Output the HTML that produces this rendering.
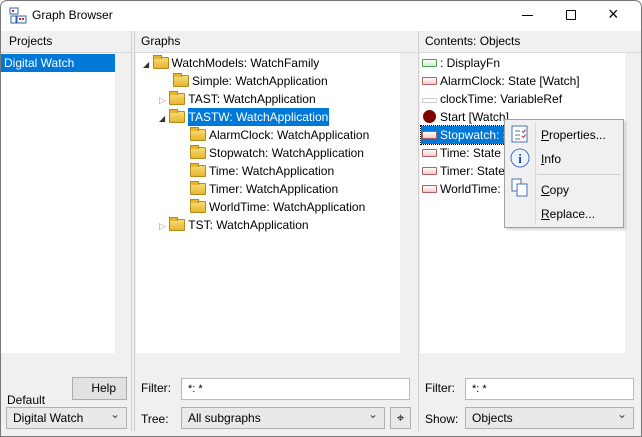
<!DOCTYPE html>
<html><head><style>
*{margin:0;padding:0;box-sizing:border-box}
body{width:642px;height:437px;overflow:hidden;background:#f0f0f0;font:12px "Liberation Sans",sans-serif;color:#000;position:relative}
.a{position:absolute}
.hdr{background:#f0f0f0;border-bottom:1px solid #d8d8d8;height:22px;line-height:21px;padding-left:9px;font-size:12px}
.white{background:#fff}
.row{position:absolute;height:18px;line-height:18px;white-space:nowrap}
.fold{display:inline-block;width:16px;height:12px;background:linear-gradient(#f7dc7a,#e8b52c);border:1px solid #b58a1c;border-radius:1px;vertical-align:-2px;margin-right:3px;position:relative}
.fold:before{content:"";position:absolute;left:-1px;top:-3px;width:7px;height:3px;background:#e8b52c;border:1px solid #b58a1c;border-bottom:none}
.inp{position:absolute;background:#fff;border:1px solid #b9b9b9;height:22px;line-height:20px;padding-left:6px;font-size:11px}
.sel{position:absolute;background:#e9e9e9;border:1px solid #b0b0b0;height:22px;line-height:20px;padding-left:6px}
.sel:after{content:"⌄";position:absolute;right:6px;top:-4px;font-size:12px;color:#444}
.st{display:inline-block;width:15px;height:8px;border:1px solid #b06060;background:linear-gradient(#fff,#f0c8c8);border-radius:1px;margin-right:3px;vertical-align:0}
</style></head><body>
<!-- title bar -->
<div class="a white" style="left:0;top:0;width:642px;height:31px"></div>
<svg class="a" style="left:9px;top:7px" width="18" height="18"><rect x="1" y="1" width="8" height="6" fill="#fff" stroke="#3060b0"/><rect x="8" y="9" width="9" height="7" fill="#fff" stroke="#3060b0"/><rect x="2" y="9" width="5" height="7" fill="#fff" stroke="#3060b0"/><rect x="3" y="3" width="2" height="2" fill="#c03030"/><rect x="10" y="11" width="2" height="2" fill="#c03030"/><rect x="13" y="11" width="2" height="2" fill="#c03030"/></svg>
<div class="a" style="left:32px;top:8px;font-size:12px">Graph Browser</div>
<div class="a" style="left:522px;top:15px;width:11px;height:1px;background:#000"></div>
<div class="a" style="left:566px;top:10px;width:10px;height:10px;border:1px solid #000;border-radius:1px"></div>
<div class="a" style="left:608px;top:4px;font-size:18px;line-height:20px">×</div>

<!-- left pane -->
<div class="a hdr" style="left:0;top:31px;width:132px">Projects</div>
<div class="a white" style="left:1px;top:53px;width:114px;height:300px"></div>
<div class="a" style="left:1px;top:54px;width:114px;height:18px;background:#0078d7;color:#fff;line-height:18px;padding-left:3px">Digital Watch</div>
<div class="a" style="left:131px;top:31px;width:1px;height:400px;background:#cfcfcf"></div>
<div class="a" style="left:72px;top:377px;width:55px;height:23px;background:#e1e1e1;border:1px solid #adadad;text-align:right;padding-right:10px;line-height:21px">Help</div>
<div class="a" style="left:7px;top:393px">Default</div>
<div class="sel" style="left:6px;top:407px;width:121px">Digital Watch</div>

<!-- middle pane -->
<div class="a" style="left:134px;top:31px;width:1px;height:400px;background:#cfcfcf"></div>
<div class="a hdr" style="left:135px;top:31px;width:281px;padding-left:6px">Graphs</div>
<div class="a white" style="left:136px;top:53px;width:264px;height:300px"></div>
<div class="row" style="left:143px;top:54px"><span style="font-size:8px;color:#333">◢</span>&nbsp;<span class="fold"></span>WatchModels: WatchFamily</div>
<div class="row" style="left:173px;top:72px"><span class="fold"></span>Simple: WatchApplication</div>
<div class="row" style="left:159px;top:90px"><span style="font-size:9px;color:#999">▷</span>&nbsp;<span class="fold"></span>TAST: WatchApplication</div>
<div class="row" style="left:159px;top:108px"><span style="font-size:8px;color:#333">◢</span>&nbsp;<span class="fold"></span><span style="background:#0078d7;color:#fff;padding:2px 1px">TASTW: WatchApplication</span></div>
<div class="row" style="left:190px;top:126px"><span class="fold"></span>AlarmClock: WatchApplication</div>
<div class="row" style="left:190px;top:144px"><span class="fold"></span>Stopwatch: WatchApplication</div>
<div class="row" style="left:190px;top:162px"><span class="fold"></span>Time: WatchApplication</div>
<div class="row" style="left:190px;top:180px"><span class="fold"></span>Timer: WatchApplication</div>
<div class="row" style="left:190px;top:198px"><span class="fold"></span>WorldTime: WatchApplication</div>
<div class="row" style="left:159px;top:216px"><span style="font-size:9px;color:#999">▷</span>&nbsp;<span class="fold"></span>TST: WatchApplication</div>
<div class="a" style="left:141px;top:381px">Filter:</div>
<div class="inp" style="left:181px;top:378px;width:229px">*: *</div>
<div class="a" style="left:141px;top:412px">Tree:</div>
<div class="sel" style="left:181px;top:407px;width:204px">All subgraphs</div>
<div class="a" style="left:390px;top:407px;width:21px;height:22px;border:1px solid #b0b0b0;background:#e9e9e9;text-align:center;line-height:19px;font-size:13px">⌖</div>

<!-- right pane -->
<div class="a" style="left:418px;top:31px;width:1px;height:400px;background:#cfcfcf"></div>
<div class="a hdr" style="left:419px;top:31px;width:222px;padding-left:6px">Contents: Objects</div>
<div class="a white" style="left:420px;top:53px;width:205px;height:300px"></div>
<div class="row" style="left:422px;top:54px"><span class="st" style="border-color:#50a050;background:linear-gradient(#fff,#c8f0c8)"></span>: DisplayFn</div>
<div class="row" style="left:422px;top:72px"><span class="st"></span>AlarmClock: State [Watch]</div>
<div class="row" style="left:422px;top:90px"><span class="st" style="border-color:#ccc;height:5px;background:#fff"></span>clockTime: VariableRef</div>
<div class="row" style="left:422px;top:108px"><span style="display:inline-block;width:13px;height:13px;border-radius:50%;background:#800000;vertical-align:-2px;margin-right:4px;margin-left:1px"></span>Start [Watch]</div>
<div class="row" style="left:421px;top:126px;background:#0078d7;color:#fff;outline:1px dotted #000;width:90px;padding-left:1px"><span class="st"></span>Stopwatch: S</div>
<div class="row" style="left:422px;top:144px"><span class="st"></span>Time: State [</div>
<div class="row" style="left:422px;top:162px"><span class="st"></span>Timer: State</div>
<div class="row" style="left:422px;top:180px"><span class="st"></span>WorldTime: </div>
<div class="a" style="left:425px;top:381px">Filter:</div>
<div class="inp" style="left:465px;top:378px;width:169px">*: *</div>
<div class="a" style="left:425px;top:412px">Show:</div>
<div class="sel" style="left:465px;top:407px;width:169px">Objects</div>

<!-- context menu -->
<div class="a" style="left:504px;top:119px;width:120px;height:109px;background:#f0f0f0;border:1px solid #a0a0a0;box-shadow:2px 2px 2px rgba(0,0,0,.15)">
 <div class="a" style="left:30px;top:2px;width:1px;height:103px;background:#d8d8d8"></div>
 <div class="a" style="left:32px;top:54px;width:83px;height:1px;background:#d0d0d0"></div>
 <svg class="a" style="left:6px;top:5px" width="18" height="18"><rect x="1" y="1" width="15" height="16" fill="#fff" stroke="#4870b0"/><path d="M4 6h5M4 10h5M4 14h5" stroke="#4870b0"/><path d="M11 6l1.5 1.5 2-3M11 11l1.5 1.5 2-3" stroke="#c03030" fill="none"/></svg>
 <div class="a" style="left:36px;top:8px"><u>P</u>roperties...</div>
 <svg class="a" style="left:5px;top:28px" width="20" height="20"><circle cx="10" cy="10" r="9" fill="#eef4ff" stroke="#4870b0"/><text x="10" y="15" font-family="Liberation Serif" font-weight="bold" font-size="13" text-anchor="middle" fill="#1a4a9a">i</text></svg>
 <div class="a" style="left:36px;top:32px"><u>I</u>nfo</div>
 <svg class="a" style="left:6px;top:58px" width="18" height="20"><rect x="1" y="1" width="9" height="12" fill="#fff" stroke="#4870b0"/><rect x="6" y="6" width="10" height="12" fill="#fff" stroke="#4870b0"/></svg>
 <div class="a" style="left:36px;top:63px"><u>C</u>opy</div>
 <div class="a" style="left:36px;top:87px"><u>R</u>eplace...</div>
</div>
<!-- window border -->
<div class="a" style="left:0;top:0;width:642px;height:437px;border:1px solid #777;border-radius:7px 7px 0 0;pointer-events:none"></div>
</body></html>
